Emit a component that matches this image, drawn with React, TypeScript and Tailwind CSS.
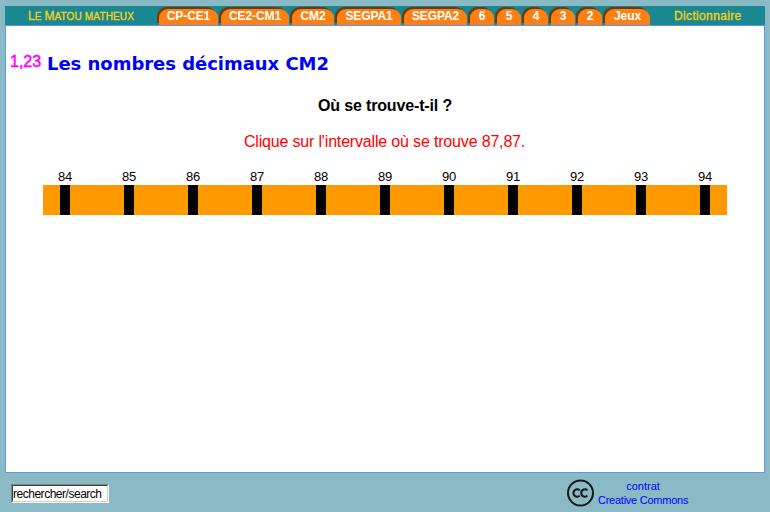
const tabs = [
  { label: 'CP-CE1', box: 'w-[59px]' },
  { label: 'CE2-CM1', box: 'w-[68px]' },
  { label: 'CM2', box: 'w-[42px]' },
  { label: 'SEGPA1', box: 'w-[64px]' },
  { label: 'SEGPA2', box: 'w-[63px]' },
  { label: '6', box: 'w-[24px]' },
  { label: '5', box: 'w-[24px]' },
  { label: '4', box: 'w-[24px]' },
  { label: '3', box: 'w-[24px]' },
  { label: '2', box: 'w-[24px]' },
  { label: 'Jeux', box: 'w-[45px]' },
];

const marks = [84, 85, 86, 87, 88, 89, 90, 91, 92, 93, 94];

function Header() {
  return (
    <header className="flex h-[19px] bg-[#1a8891] text-xs whitespace-nowrap">
      <a className="w-[154px] pl-[23px] pt-[3px] leading-[14px] text-[#f5d012] [-webkit-text-stroke:0.35px_#f5d012]">
        <span className="text-[12px]">L</span>
        <span className="text-[10px] tracking-[0.15px]">E </span>
        <span className="text-[12px]">M</span>
        <span className="text-[10px] tracking-[0.15px]">ATOU MATHEUX</span>
      </a>
      <nav className="flex gap-[3px] pt-[3px]">
        {tabs.map((tab) => (
          <a
            key={tab.label}
            className={`${tab.box} flex h-4 justify-center rounded-t-[9px] bg-[#fb8115] pt-px font-bold leading-[13px] tracking-[-0.1px] text-white shadow-[-2px_-2px_0_#703b0b]`}
          >
            {tab.label}
          </a>
        ))}
      </nav>
      <a className="ml-6 pt-[3px] leading-[14px] tracking-[0.35px] text-[#f5d012] [-webkit-text-stroke:0.35px_#f5d012]">Dictionnaire</a>
    </header>
  );
}

function NumberLine() {
  return (
    <div className="mx-auto mt-[17px] w-[684px]">
      <div className="-ml-[10px] flex pt-px text-[13px] leading-[16px] text-black">
        {marks.map((n) => (
          <span key={n} className="w-16 shrink-0 text-center tracking-[-0.2px]">{n}</span>
        ))}
      </div>
      <div className="flex h-[30px] gap-[54px] bg-[#ff9900] pl-[17px]">
        {marks.map((n) => (
          <div key={n} className="w-[10px] shrink-0 bg-black" />
        ))}
      </div>
    </div>
  );
}

function CreativeCommons() {
  return (
    <div className="flex text-[11px] leading-[14px] text-[#0000ff]">
      <svg className="h-7 w-7" viewBox="0 0 28 28" fill="none" stroke="#161616">
        <circle cx="13.5" cy="14" r="12.5" strokeWidth="2" />
        <path d="M12.7 11.4C10.9 9.5 6.5 10.2 6.5 14s4.4 4.5 6.2 2.6M20.4 11.4C18.6 9.5 14.2 10.2 14.2 14s4.4 4.5 6.2 2.6" strokeWidth="2" />
      </svg>
      <p className="ml-[3px] w-[90px] whitespace-nowrap text-center">
        contrat
        <br />
        <span className="tracking-[-0.25px]">Creative Commons</span>
      </p>
    </div>
  );
}

export default function App() {
  return (
    <div className="h-[512px] w-[770px] overflow-hidden bg-[#8bbac7] px-[5px] pt-[6px] font-['Liberation_Sans',Arial,sans-serif]">
      <Header />
      <main className="h-[448px] border border-[#6495ed] bg-white">
        <div className="flex pl-[4px] pt-[25px]">
          <span className="w-[37px] pt-[2px] text-[16px] leading-[18px] text-[#ff00ff] [-webkit-text-stroke:0.5px_#ff00ff]">1,23</span>
          <h1 className="whitespace-nowrap pt-px font-['DejaVu_Sans',Verdana,sans-serif] text-[18px] font-bold leading-[24px] tracking-[-0.03px] text-[#0000ff]">
            Les nombres décimaux CM2
          </h1>
        </div>
        <h2 className="mt-[21px] text-center text-base font-bold leading-[18px] tracking-[-0.15px] text-black">Où se trouve-t-il ?</h2>
        <p className="mt-[18px] pr-px text-center text-base leading-[18px] tracking-[-0.17px] text-[#ff0000]">
          Clique sur l'intervalle où se trouve 87,87.
        </p>
        <NumberLine />
      </main>
      <footer className="flex">
        <div className="ml-[6px] mt-[11px] h-[19px] w-[98px] border border-b-white border-l-[#808080] border-r-white border-t-[#808080]">
          <input
            className="block h-[17px] w-[96px] border border-b-[#d4d0c8] border-l-[#404040] border-r-[#d4d0c8] border-t-[#404040] bg-white font-['Liberation_Sans',sans-serif] text-[12px] leading-[14px] tracking-[-0.48px] text-black outline-none"
            defaultValue="rechercher/search"
          />
        </div>
        <div className="ml-[458px] mt-[6px]">
          <CreativeCommons />
        </div>
      </footer>
    </div>
  );
}
